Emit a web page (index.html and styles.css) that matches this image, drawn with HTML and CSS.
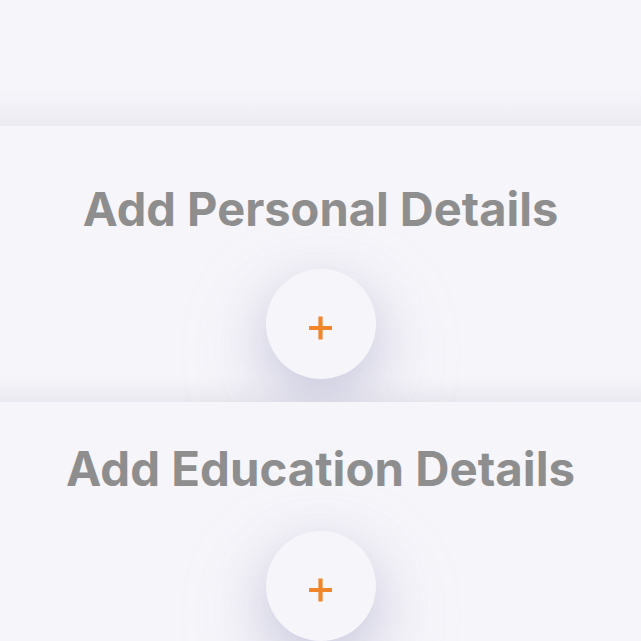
FILE: index.html
```html
<!DOCTYPE html>
<html lang="en">
<head>
<meta charset="utf-8">
<title>Add Details</title>
<link rel="stylesheet" href="styles.css">
</head>
<body>
  <div class="top"></div>
  <section class="section section--first">
    <h2 class="title">Add Personal Details</h2>
    <button class="add-btn" type="button" aria-label="Add personal details">
      <svg class="plus" viewBox="0 0 24 24" width="25" height="25" aria-hidden="true">
        <path d="M12 1.5V23.5M1 12.5H23" />
      </svg>
    </button>
  </section>
  <section class="section section--second">
    <h2 class="title">Add Education Details</h2>
    <button class="add-btn" type="button" aria-label="Add education details">
      <svg class="plus" viewBox="0 0 24 24" width="25" height="25" aria-hidden="true">
        <path d="M12 1.5V23.5M1 12.5H23" />
      </svg>
    </button>
  </section>
</body>
</html>
```
FILE: styles.css
```css
html, body {
  margin: 0;
  padding: 0;
  background: #f6f5fa;
}

body {
  font-family: Inter, "Noto Sans", sans-serif;
  overflow: hidden;
  height: 641px;
}

.top {
  height: 126px;
  background: linear-gradient(to bottom, #f6f5fa 0, #f6f5fa 70%, #f2f1f7 85%, #ebeaf1 100%);
}

.section {
  display: flex;
  flex-direction: column;
  align-items: center;
  box-sizing: border-box;
  background: #f6f5fa;
  overflow: hidden;
}

.section--first {
  height: 276px;
  padding-top: 54px;
  background: linear-gradient(to bottom, #f6f5fa 0, #f6f5fa calc(100% - 26px), #efeef4 calc(100% - 10px), #e9e8f0 100%);
}

.section--second {
  padding-top: 38px;
  height: 239px;
}

.title {
  margin: 0;
  font-size: 47px;
  font-weight: 700;
  line-height: 58px;
  color: #8e8e8e;
}

.section--second .title {
  font-size: 47.4px;
}

.add-btn {
  margin-top: 31px;
  width: 110px;
  height: 110px;
  flex: none;
  border: none;
  border-radius: 50%;
  background: #f6f5fa;
  box-shadow: 0 18px 50px rgba(160, 160, 195, 0.45), 0 30px 90px rgba(190, 190, 215, 0.28);
  display: flex;
  align-items: center;
  justify-content: center;
  padding: 6px 0 0 0;
  cursor: pointer;
}

.section--second .add-btn {
  margin-top: 33px;
}

.plus {
  display: block;
  fill: none;
  stroke: #f08529;
  stroke-width: 4;
  stroke-linecap: butt;
}
```
